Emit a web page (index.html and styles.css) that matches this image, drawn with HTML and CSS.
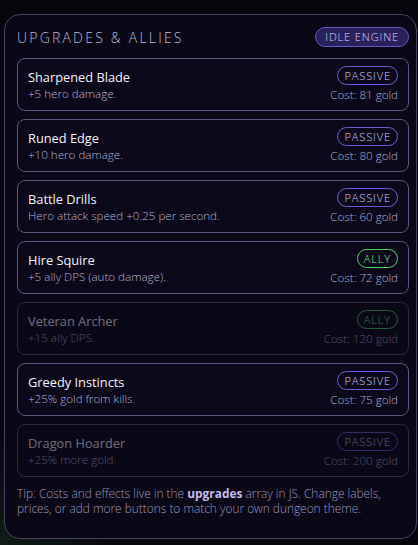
FILE: index.html
```html
<!DOCTYPE html>
<html lang="en">
<head>
    <meta charset="UTF-8">
    <meta name="viewport" content="width=device-width, initial-scale=1.0">
    <title>Upgrades &amp; Allies</title>
    <link rel="stylesheet" href="styles.css">
</head>
<body>
    <div class="panel">
        <div class="panel-head">
            <h2>Upgrades &amp; Allies</h2>
            <span class="badge">Idle Engine</span>
        </div>

        <div class="upgrade-list">
            <div class="upgrade">
                <div class="info">
                    <div class="name">Sharpened Blade</div>
                    <div class="desc">+5 hero damage.</div>
                </div>
                <div class="meta">
                    <span class="tag">Passive</span>
                    <span class="cost">Cost: 81 gold</span>
                </div>
            </div>
            <div class="upgrade">
                <div class="info">
                    <div class="name">Runed Edge</div>
                    <div class="desc">+10 hero damage.</div>
                </div>
                <div class="meta">
                    <span class="tag">Passive</span>
                    <span class="cost">Cost: 80 gold</span>
                </div>
            </div>
            <div class="upgrade">
                <div class="info">
                    <div class="name">Battle Drills</div>
                    <div class="desc">Hero attack speed +0.25 per second.</div>
                </div>
                <div class="meta">
                    <span class="tag">Passive</span>
                    <span class="cost">Cost: 60 gold</span>
                </div>
            </div>
            <div class="upgrade">
                <div class="info">
                    <div class="name">Hire Squire</div>
                    <div class="desc">+5 ally DPS (auto damage).</div>
                </div>
                <div class="meta">
                    <span class="tag ally">Ally</span>
                    <span class="cost">Cost: 72 gold</span>
                </div>
            </div>
            <div class="upgrade locked">
                <div class="info">
                    <div class="name">Veteran Archer</div>
                    <div class="desc">+15 ally DPS.</div>
                </div>
                <div class="meta">
                    <span class="tag ally">Ally</span>
                    <span class="cost">Cost: 120 gold</span>
                </div>
            </div>
            <div class="upgrade">
                <div class="info">
                    <div class="name">Greedy Instincts</div>
                    <div class="desc">+25% gold from kills.</div>
                </div>
                <div class="meta">
                    <span class="tag">Passive</span>
                    <span class="cost">Cost: 75 gold</span>
                </div>
            </div>
            <div class="upgrade locked">
                <div class="info">
                    <div class="name">Dragon Hoarder</div>
                    <div class="desc">+25% more gold.</div>
                </div>
                <div class="meta">
                    <span class="tag">Passive</span>
                    <span class="cost">Cost: 200 gold</span>
                </div>
            </div>
        </div>

        <p class="tip">Tip: Costs and effects live in the <strong>upgrades</strong> array in JS. Change labels, prices, or add more buttons to match your own dungeon theme.</p>
    </div>
</body>
</html>
```

FILE: styles.css
```css
html {
    background: #07060d;
}
body {
    margin: 0;
    padding: 14px 1px 8px 4px;
    min-height: 545px;
    box-sizing: border-box;
    font-family: "Open Sans", "Noto Sans", sans-serif;
    font-weight: 300;
    color: #f2f0fa;
    background: radial-gradient(circle at 0% 100%, rgba(30, 70, 40, 0.35), rgba(7, 6, 13, 0) 120px), #07060d;
}
.panel {
    background: #0a0817;
    border: 1px solid #47415f;
    border-radius: 16px;
    padding: 12px 7px 22px 12px;
}
.panel-head {
    display: flex;
    justify-content: space-between;
    align-items: center;
    margin-bottom: 11px;
}
h2 {
    margin: 0;
    font-size: 14px;
    font-weight: 300;
    letter-spacing: 2.2px;
    text-transform: uppercase;
    color: #bdb8d6;
}
.badge {
    display: inline-block;
    height: 18px;
    line-height: 18px;
    padding: 0 9px;
    border: 1px solid #6557c8;
    border-radius: 10px;
    background: #28215c;
    color: #dcd6ff;
    font-size: 11px;
    letter-spacing: 0.9px;
    text-transform: uppercase;
}
.upgrade-list {
    display: flex;
    flex-direction: column;
    gap: 8px;
}
.upgrade {
    display: flex;
    justify-content: space-between;
    align-items: center;
    padding: 7px 10px 7px 10px;
    border: 1px solid #5d5780;
    border-radius: 8px;
    background: #0b0919;
}
.upgrade.locked {
    opacity: 0.42;
}
.name {
    font-size: 12.8px;
    font-weight: 400;
    line-height: 18px;
    color: #f4f2fb;
}
.desc {
    font-size: 11.6px;
    line-height: 16px;
    color: #b4add8;
}
.meta {
    display: flex;
    flex-direction: column;
    align-items: flex-end;
    gap: 2px;
}
.tag {
    height: 17px;
    line-height: 17px;
    padding: 0 6px;
    border: 1px solid #6a5ed6;
    border-radius: 10px;
    color: #d2cbff;
    font-size: 11px;
    letter-spacing: 0.9px;
    text-transform: uppercase;
}
.tag.ally {
    border-color: #4fd65f;
    color: #7cf08b;
}
.cost {
    font-size: 11.6px;
    line-height: 16px;
    color: #b4add8;
}
.tip {
    margin: 9px 0 0 0;
    font-size: 11.9px;
    line-height: 15px;
    color: #9c96bb;
}
.tip strong {
    font-weight: 700;
    color: #c3bce6;
}
```
